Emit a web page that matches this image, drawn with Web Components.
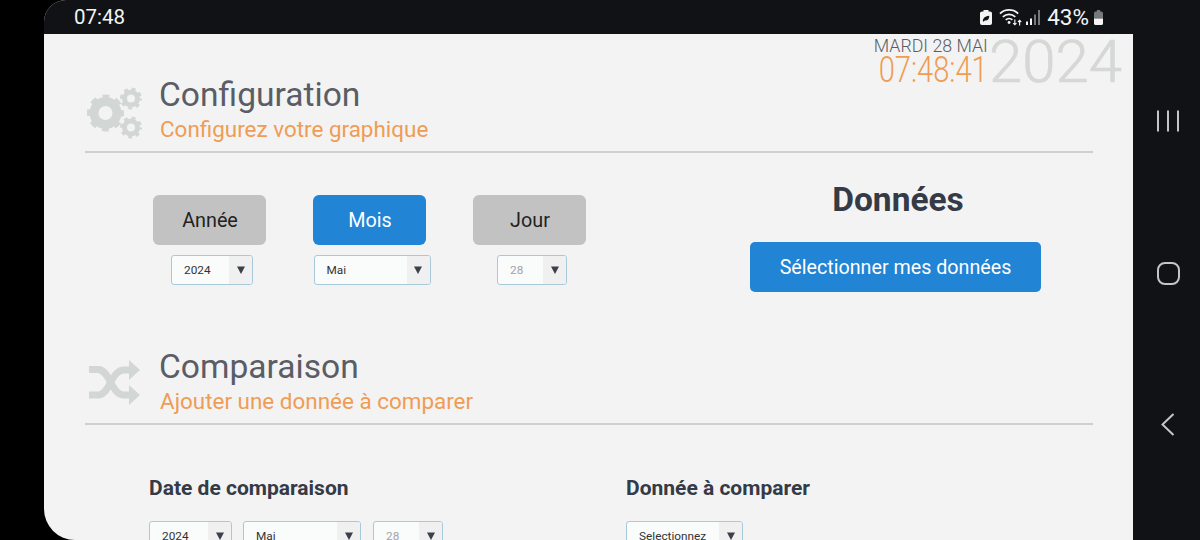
<!DOCTYPE html>
<html lang="fr">
<head>
<meta charset="utf-8">
<title>Configuration</title>
<style>
  html, body { margin: 0; height: 100%; background: #000; overflow: hidden; }
  body { font-family: Roboto, "Liberation Sans", sans-serif; }
  section-head:first-of-type { margin-top: 39px; }
</style>
</head>
<body>
<phone-shell>
  <status-bar time="07:48" level="43%"></status-bar>
  <date-clock day="MARDI 28 MAI" time="07:48:41" year="2024"></date-clock>

  <section-head icon="gears" title="Configuration" subtitle="Configurez votre graphique"></section-head>
  <config-row>
    <period-control label="Année" value="2024" width="82"></period-control>
    <period-control label="Mois" value="Mai" width="117" active></period-control>
    <period-control label="Jour" value="28" width="70" muted></period-control>
    <data-panel slot="side" title="Données" action="Sélectionner mes données"></data-panel>
  </config-row>

  <section-head icon="shuffle" title="Comparaison" subtitle="Ajouter une donnée à comparer"></section-head>
  <compare-row>
    <field-group title="Date de comparaison">
      <pick-select width="83">2024</pick-select>
      <pick-select width="118">Mai</pick-select>
      <pick-select width="70" muted style="margin-left:1px">28</pick-select>
    </field-group>
    <field-group slot="side" title="Donnée à comparer">
      <pick-select width="117">Selectionnez</pick-select>
    </field-group>
  </compare-row>
</phone-shell>

<script>
class PhoneShell extends HTMLElement {
  constructor() {
    super();
    this.attachShadow({ mode: 'open' }).innerHTML = `
      <style>
        :host { display: flex; width: 1200px; height: 540px; background: #000; overflow: hidden; }
        .screen {
          position: relative; margin-left: 44px; width: 1089px; height: 540px;
          background: #f3f3f3; border-radius: 22px 0 0 31px; overflow: hidden;
        }
        nav {
          flex: 1; background: #111216; border-left: 1px solid #5d5e62;
          display: flex; flex-direction: column; align-items: center; box-sizing: border-box;
          padding: 110px 0 0 3px; margin-left: -1px;
        }
        nav svg { display: block; fill: none; stroke: #c4c5c7; stroke-width: 2; }
        nav .home { margin-top: 130px; }
        nav .back { margin-top: 128px; }
      </style>
      <div class="screen"><slot></slot></div>
      <nav>
        <svg width="22" height="22" viewBox="0 0 22 22"><path d="M1 .5v21M11 .5v21M21 .5v21"/></svg>
        <svg class="home" width="23" height="23" viewBox="0 0 23 23"><rect x="1" y="1" width="21" height="21" rx="7"/></svg>
        <svg class="back" width="14" height="23" viewBox="0 0 14 23"><path d="M12.500 1 1.500 11.500l11 10.500"/></svg>
      </nav>`;
  }
}

class StatusBar extends HTMLElement {
  constructor() {
    super();
    this.attachShadow({ mode: 'open' });
  }
  connectedCallback() {
    this.shadowRoot.innerHTML = `
      <style>
        :host {
          display: flex; align-items: center; height: 34px; background: #111216; color: #f4f4f4;
          padding: 0 30px 0 30px; font: 400 20.500px/34px Roboto, sans-serif;
        }
        .time { flex: 1; }
        svg { display: block; flex: none; }
        .level { font-size: 22.500px; margin-right: 5px; }
      </style>
      <span class="time">${this.getAttribute('time')}</span>
      <svg width="12" height="15" viewBox="0 0 12 17" preserveAspectRatio="none" style="margin-right:7px">
        <path fill="#f4f4f4" d="M3.500 0h5v1.600H10A2 2 0 0 1 12 3.600V15a2 2 0 0 1-2 2H2a2 2 0 0 1-2-2V3.600A2 2 0 0 1 2 1.600h1.500z"/>
        <path fill="#111216" d="M2.800 12.600C3 8.800 5.500 6.600 9.300 6.400 9.400 10.200 7.500 12.400 4.600 11.800l-.9 1.600z"/>
      </svg>
      <svg width="23" height="20" viewBox="0 0 24 20" style="margin-right:4px" fill="none" stroke="#f4f4f4" stroke-width="1.800">
        <path d="M1 6.500C6.200 1.300 14.800 1.300 20 6.500M4 9.800c3.800-3.500 9.200-3.500 13 0M7 13c2-1.800 5-1.800 7 0"/>
        <circle cx="10.500" cy="15.800" r="1.500" fill="#f4f4f4" stroke="none"/>
        <path stroke-width="1.200" d="M16.500 12.500v5.500M14.800 16.400l1.700 1.700 1.700-1.700M21.500 19v-5.500M19.800 15.200l1.700-1.700 1.700 1.700"/>
      </svg>
      <svg width="14" height="15" viewBox="0 0 14 15" style="margin-right:7px">
        <rect x="0" y="11.500" width="2" height="3.500" fill="#f4f4f4"/>
        <rect x="4" y="8.500" width="2" height="6.500" fill="#f4f4f4"/>
        <rect x="8" y="4.500" width="2" height="10.500" fill="#77787b"/>
        <rect x="12" y="0" width="2" height="15" fill="#77787b"/>
      </svg>
      <span class="level">${this.getAttribute('level')}</span>
      <svg width="9" height="15" viewBox="0 0 11 16" preserveAspectRatio="none">
        <path fill="#77787b" d="M3.500 0h4v1.500h1.500A2 2 0 0 1 11 3.500V9H0V3.500a2 2 0 0 1 2-2h1.500z"/>
        <path fill="#f4f4f4" d="M0 9h11v5a2 2 0 0 1-2 2H2a2 2 0 0 1-2-2z"/>
      </svg>`;
  }
}

class DateClock extends HTMLElement {
  constructor() {
    super();
    this.attachShadow({ mode: 'open' });
  }
  connectedCallback() {
    this.shadowRoot.innerHTML = `
      <style>
        :host {
          position: absolute; top: 34px; right: 11px; display: flex; align-items: flex-start;
          font-family: Roboto, sans-serif; font-weight: 300;
        }
        .left { width: 118px; display: flex; flex-direction: column; align-items: flex-end; }
        .day { font-size: 17.800px; line-height: 21px; color: #5a5d66; white-space: nowrap; margin: 1px 1px 0 0; }
        .time {
          font-size: 37px; line-height: 28px; color: #ef9c55; white-space: nowrap;
          transform: scaleX(.786); transform-origin: right center; margin-right: 1px;
        }
        .year { font-size: 60px; line-height: 56px; color: #d5d8d6; -webkit-text-stroke: .7px #d5d8d6; }
      </style>
      <div class="left">
        <div class="day">${this.getAttribute('day')}</div>
        <div class="time">${this.getAttribute('time')}</div>
      </div>
      <div class="year">${this.getAttribute('year')}</div>`;
  }
}

const SECTION_ICONS = {
  gears: `<svg width="57" height="58" viewBox="0 0 57 58" fill="none" stroke="#d2d6d4">
      <circle cx="20.500" cy="30" r="11.500" stroke-width="9"/>
      <circle cx="20.500" cy="30" r="16" stroke-width="5" stroke-dasharray="6.560 6" stroke-dashoffset="3.280"/>
      <g stroke-width="5">
        <circle cx="46" cy="15.500" r="6.500"/>
        <circle cx="46" cy="44.500" r="6.500"/>
      </g>
      <g stroke-width="3" stroke-dasharray="3.900 3.950" stroke-dashoffset="1.950">
        <circle cx="46" cy="15.500" r="9.500"/>
        <circle cx="46" cy="44.500" r="9.500"/>
      </g>
    </svg>`,
  shuffle: `<svg width="57" height="58" viewBox="0 0 57 58">
      <g fill="none" stroke="#d2d6d4" stroke-width="7">
        <path d="M4 14.500h9c12 0 13 25.500 26 25.500h8"/>
        <path d="M4 40h9c12 0 13-25 26-25h8"/>
      </g>
      <path fill="#d2d6d4" d="M44 5v20l11-10zM44 30v20l11-10z"/>
    </svg>`
};

class SectionHead extends HTMLElement {
  constructor() {
    super();
    this.attachShadow({ mode: 'open' });
  }
  connectedCallback() {
    this.shadowRoot.innerHTML = `
      <style>
        :host {
          display: flex; align-items: flex-end; margin: 0 40px 0 41px; height: 78px;
          border-bottom: 2px solid #cfcfcf; font-family: Roboto, sans-serif;
        }
        .icon { width: 75px; flex: none; padding-bottom: 10px; }
        svg { display: block; }
        h2 { margin: 0 0 1px -1px; font-size: 33.600px; line-height: 38px; font-weight: 400; color: #5a5d66; }
        p { margin: 0 0 8px; font-size: 22.450px; line-height: 28px; color: #ef9c55; white-space: nowrap; }
      </style>
      <div class="icon">${SECTION_ICONS[this.getAttribute('icon')]}</div>
      <div>
        <h2>${this.getAttribute('title')}</h2>
        <p>${this.getAttribute('subtitle')}</p>
      </div>`;
  }
}

class PickSelect extends HTMLElement {
  constructor() {
    super();
    this.attachShadow({ mode: 'open' });
  }
  connectedCallback() {
    const muted = this.hasAttribute('muted');
    this.shadowRoot.innerHTML = `
      <style>
        :host {
          display: flex; flex: none; height: 30px; width: ${this.getAttribute('width')}px; box-sizing: border-box;
          border: 1px solid #a8c9da; border-radius: 3px; background: #fafbfb; overflow: hidden;
          font: 400 11.800px/28px Roboto, sans-serif; color: ${muted ? '#a4a4a4' : '#333'};
        }
        .value { flex: 1; padding-left: 12px; white-space: nowrap; overflow: hidden; }
        .arrow { width: 23px; background: #f0f0f0; display: flex; align-items: center; justify-content: center; }
        svg { display: block; fill: #3c4048; }
      </style>
      <div class="value"><slot></slot></div>
      <div class="arrow"><svg width="8" height="8" viewBox="0 0 8 8"><path d="M0 .5h8L4 8z"/></svg></div>`;
  }
}

class PeriodControl extends HTMLElement {
  constructor() {
    super();
    this.attachShadow({ mode: 'open' });
  }
  connectedCallback() {
    const active = this.hasAttribute('active');
    const muted = this.hasAttribute('muted') ? 'muted' : '';
    this.shadowRoot.innerHTML = `
      <style>
        :host { display: flex; flex-direction: column; align-items: center; width: 113px; gap: 10px; font-family: Roboto, sans-serif; }
        .btn {
          width: 113px; height: 50px; border-radius: 6px; box-sizing: border-box; padding-left: 1px;
          display: flex; align-items: center; justify-content: center; font-size: 19.800px;
          background: ${active ? '#2184d4' : '#c2c2c2'}; color: ${active ? '#fff' : '#222'};
        }
        pick-select { margin-left: 5px; }
      </style>
      <div class="btn">${this.getAttribute('label')}</div>
      <pick-select width="${this.getAttribute('width')}" ${muted}>${this.getAttribute('value')}</pick-select>`;
  }
}

class DataPanel extends HTMLElement {
  constructor() {
    super();
    this.attachShadow({ mode: 'open' });
  }
  connectedCallback() {
    this.shadowRoot.innerHTML = `
      <style>
        :host { display: flex; flex-direction: column; align-items: center; width: 291px; font-family: Roboto, sans-serif; }
        h3 { margin: 0 0 0 5px; font-size: 33.500px; line-height: 40px; font-weight: 700; color: #343a46; }
        .btn {
          margin-top: 22px; width: 291px; height: 50px; border-radius: 5px; background: #2184d4; color: #fff;
          display: flex; align-items: center; justify-content: center; font-size: 19.700px;
        }
      </style>
      <h3>${this.getAttribute('title')}</h3>
      <div class="btn">${this.getAttribute('action')}</div>`;
  }
}

class ConfigRow extends HTMLElement {
  constructor() {
    super();
    this.attachShadow({ mode: 'open' }).innerHTML = `
      <style>
        :host { display: flex; align-items: flex-start; height: 192px; padding: 42px 0 0 109px; box-sizing: border-box; }
        .periods { display: flex; gap: 47px; }
        .side { margin: -15px 0 0 164px; }
      </style>
      <div class="periods"><slot></slot></div>
      <div class="side"><slot name="side"></slot></div>`;
  }
}

class CompareRow extends HTMLElement {
  constructor() {
    super();
    this.attachShadow({ mode: 'open' }).innerHTML = `
      <style>
        :host { display: flex; align-items: flex-start; padding: 49px 0 0 105px; }
        .main { width: 477px; }
      </style>
      <div class="main"><slot></slot></div>
      <div><slot name="side"></slot></div>`;
  }
}

class FieldGroup extends HTMLElement {
  constructor() {
    super();
    this.attachShadow({ mode: 'open' });
  }
  connectedCallback() {
    this.shadowRoot.innerHTML = `
      <style>
        :host { display: block; font-family: Roboto, sans-serif; }
        h4 { margin: 0 0 19px; font-size: 21px; line-height: 28px; font-weight: 700; color: #343a46; }
        .fields { display: flex; gap: 11px; }
      </style>
      <h4>${this.getAttribute('title')}</h4>
      <div class="fields"><slot></slot></div>`;
  }
}

customElements.define('phone-shell', PhoneShell);
customElements.define('status-bar', StatusBar);
customElements.define('date-clock', DateClock);
customElements.define('section-head', SectionHead);
customElements.define('pick-select', PickSelect);
customElements.define('period-control', PeriodControl);
customElements.define('data-panel', DataPanel);
customElements.define('config-row', ConfigRow);
customElements.define('compare-row', CompareRow);
customElements.define('field-group', FieldGroup);
</script>
</body>
</html>
